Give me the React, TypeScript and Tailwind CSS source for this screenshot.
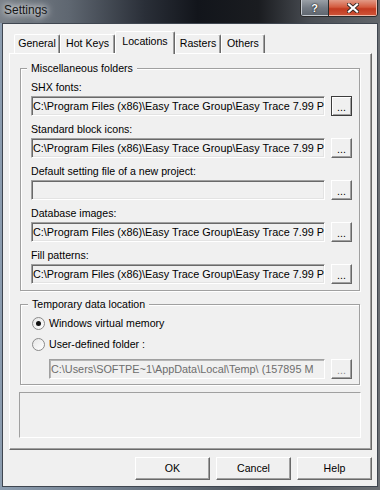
import React from "react";

const paths = [
  { label: "SHX fonts:", value: "C:\\Program Files (x86)\\Easy Trace Group\\Easy Trace 7.99 P" },
  { label: "Standard block icons:", value: "C:\\Program Files (x86)\\Easy Trace Group\\Easy Trace 7.99 P" },
  { label: "Default setting file of a new project:", value: "" },
  { label: "Database images:", value: "C:\\Program Files (x86)\\Easy Trace Group\\Easy Trace 7.99 P" },
  { label: "Fill patterns:", value: "C:\\Program Files (x86)\\Easy Trace Group\\Easy Trace 7.99 P" },
];

const tabs = ["General", "Hot Keys", "Locations", "Rasters", "Others"];
const tabWidths: Record<string, string> = {
  General: "w-[46px]",
  "Hot Keys": "w-[55px]",
  Locations: "w-[60px]",
  Rasters: "w-[46px]",
  Others: "w-[44px]",
};

const Browse = ({ focused = false, disabled = false }: { focused?: boolean; disabled?: boolean }) => (
  <div
    className={
      "ml-[6px] w-[21px] h-[20px] flex items-end justify-center pb-[4px] leading-[8px] bg-[#f0f0f0] " +
      (focused
        ? "border border-[#3c3c3c] shadow-[inset_1px_1px_0_#fff,inset_-1px_-1px_0_#a0a0a0]"
        : "border border-t-white border-l-white border-r-[#696969] border-b-[#696969] shadow-[inset_-1px_-1px_0_#a0a0a0]") +
      (disabled ? " text-[#8d8d8d]" : " text-black")
    }
  >
    ...
  </div>
);

const Field = ({ value, disabled = false, width = "w-[294px]" }: { value: string; disabled?: boolean; width?: string }) => (
  <div
    className={
      width +
      " h-[20px] pl-[1px] text-[10.85px] leading-[18px] overflow-hidden whitespace-nowrap bg-[#f0f0f0] border border-t-[#a0a0a0] border-l-[#a0a0a0] border-b-white border-r-white " +
      (disabled
        ? "text-[#6d6d6d] shadow-[inset_1px_1px_0_#b5b5b5]"
        : "text-black shadow-[inset_1px_1px_0_#696969,inset_-1px_-1px_0_#e3e3e3]")
    }
  >
    {value}
  </div>
);

const Radio = ({ checked, label }: { checked: boolean; label: string }) => (
  <div className="flex items-center h-[13px] ml-[1px]">
    <div className="w-[13px] h-[13px] rounded-full border border-[#8a8a8a] bg-[linear-gradient(135deg,#e6e6e6,#ffffff)] flex items-center justify-center">
      {checked && <div className="w-[5px] h-[5px] rounded-full bg-[#111]" />}
    </div>
    <span className="ml-[4px] leading-[13px]">{label}</span>
  </div>
);

export default function App() {
  return (
    <div className="w-[380px] h-[490px] overflow-hidden bg-[linear-gradient(90deg,#8c9db0_0%,#6f7c8b_30%,#4c5259_70%,#6b6f74_100%)] font-['Liberation_Sans',Arial,sans-serif] text-[10.6px] text-black">
      {/* Title bar */}
      <div className="h-[23px] flex justify-between items-start bg-[linear-gradient(90deg,#7a8189_0%,#5f6771_18%,#2a2f38_38%,#12151b_52%,#1a1c20_68%,#4a4e54_82%,#62666b_100%)]">
        <div className="ml-[4px] mt-[3px] text-[12px] leading-[15px] text-[#151515] [text-shadow:0_0_6px_#fff,0_0_10px_#fff]">
          Settings
        </div>
        <div className="flex mr-[2px] border border-t-0 border-[#2a2a2a] rounded-b-[4px] overflow-hidden">
          <div className="w-[28px] h-[16px] flex items-center justify-center bg-[linear-gradient(180deg,#9aa0a7_0%,#737a83_50%,#5d646d_100%)] border-r border-[#2a2a2a] shadow-[inset_0_-1px_0_#c5cad0,inset_1px_0_0_#c5cad0]">
            <span className="text-[11px] font-bold leading-[11px] text-white [text-shadow:0_0_2px_#222,0_0_1px_#000]">?</span>
          </div>
          <div className="w-[48px] h-[16px] flex items-center justify-center bg-[linear-gradient(180deg,#e29a86_0%,#d35a3e_45%,#c23a20_55%,#d0563a_100%)] shadow-[inset_0_-1px_0_#f0b8a8,inset_-1px_0_0_#f0b8a8]">
            <svg width="12" height="10" viewBox="0 0 12 10">
              <path d="M2 1.5 L10 8.5 M10 1.5 L2 8.5" stroke="#3a2a26" strokeWidth="4" strokeLinecap="square" />
              <path d="M2 1.5 L10 8.5 M10 1.5 L2 8.5" stroke="#fff" strokeWidth="2.2" strokeLinecap="square" />
            </svg>
          </div>
        </div>
      </div>

      {/* Client area */}
      <div className="ml-[2px] w-[376px] h-[464px] border border-[#3f4650] bg-[#f0f0f0] pt-[7px]">
        {/* Tabs */}
        <div className="ml-[11px] h-[22px] flex items-end">
          {tabs.map((t) =>
            t === "Locations" ? (
              <div
                key={t}
                className={tabWidths[t] + " relative z-10 h-[23px] -mb-[1px] flex items-center justify-center bg-[#f0f0f0] border-t border-l border-r border-t-white border-l-white border-r-[#696969] rounded-t-[2px] shadow-[inset_-1px_0_0_#a0a0a0] pb-[2px]"}
              >
                {t}
              </div>
            ) : (
              <div
                key={t}
                className={tabWidths[t] + " h-[19px] flex items-center justify-center border-t border-l border-r border-t-white border-l-white border-r-[#696969] rounded-t-[2px] shadow-[inset_-1px_0_0_#a0a0a0]"}
              >
                {t}
              </div>
            )
          )}
        </div>

        {/* Tab panel */}
        <div className="ml-[6px] w-[363px] h-[397px] border border-t-white border-l-white border-r-[#696969] border-b-[#696969] shadow-[inset_-1px_-1px_0_#a0a0a0] pt-[8px]">
          <fieldset className="ml-[10px] w-[340px] border border-[#a0a0a0] shadow-[inset_1px_1px_0_#fff,1px_1px_0_#fff] pl-[10px] pr-[7px] pt-[6px] pb-[6px]">
            <legend className="-ml-[4px] px-[4px] leading-[13px] bg-[#f0f0f0]">Miscellaneous folders</legend>
            {paths.map((p, i) => (
              <div key={p.label} className={i === 0 ? "" : "mt-[7px]"}>
                <div className="h-[15px] leading-[13px] whitespace-nowrap">{p.label}</div>
                <div className="flex">
                  <Field value={p.value} />
                  <Browse focused={i === 0} />
                </div>
              </div>
            ))}
          </fieldset>

          <fieldset className="mt-[7px] ml-[10px] w-[340px] border border-[#a0a0a0] shadow-[inset_1px_1px_0_#fff,1px_1px_0_#fff] pl-[10px] pr-[7px] pt-[6px] pb-[5px]">
            <legend className="-ml-[3px] px-[4px] leading-[13px] bg-[#f0f0f0]">Temporary data location</legend>
            <Radio checked label="Windows virtual memory" />
            <div className="mt-[8px]">
              <Radio checked={false} label="User-defined folder :" />
            </div>
            <div className="mt-[8px] ml-[18px] flex">
              <Field disabled width="w-[276px]" value="C:\Users\SOFTPE~1\AppData\Local\Temp\ (157895 M" />
              <Browse disabled />
            </div>
          </fieldset>

          <div className="mt-[7px] ml-[9px] w-[342px] h-[46px] border border-t-[#a0a0a0] border-l-[#a0a0a0] border-b-white border-r-white" />
        </div>

        {/* Dialog buttons */}
        <div className="mt-[7px] pr-[5px] flex justify-end gap-[6px]">
          {["OK", "Cancel", "Help"].map((b) => (
            <div
              key={b}
              className="w-[75px] h-[23px] flex items-center justify-center border border-t-white border-l-white border-r-[#696969] border-b-[#696969] shadow-[inset_-1px_-1px_0_#a0a0a0]"
            >
              {b}
            </div>
          ))}
        </div>
      </div>
    </div>
  );
}
